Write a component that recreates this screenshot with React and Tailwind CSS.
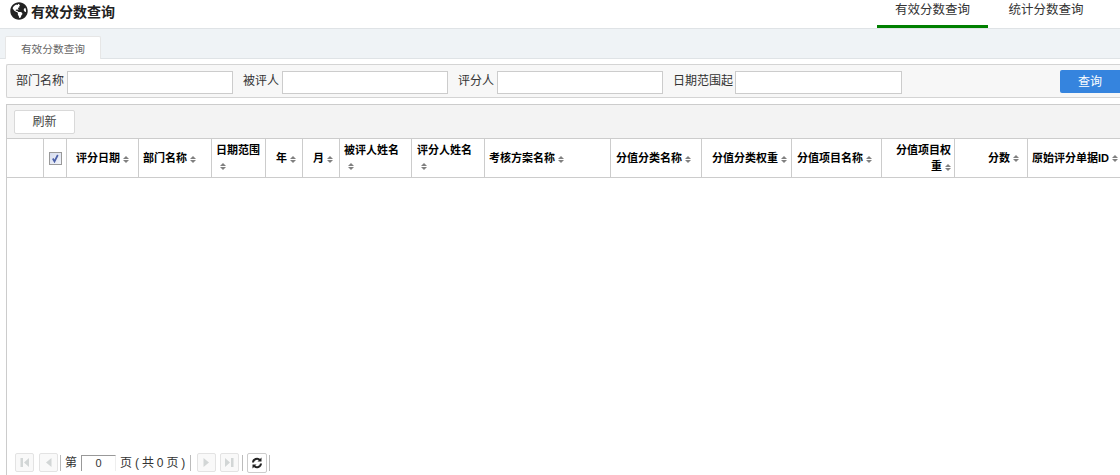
import React from "react";
import { FaGlobeAmericas } from "react-icons/fa";

const font = { fontFamily: '"Liberation Sans", "Noto Sans CJK SC", sans-serif' };

function Sort() {
  return (
    <span className="inline-flex flex-col items-center align-middle ml-[3px] gap-[1px] w-[6px]">
      <span className="w-0 h-0 border-x-[3px] border-x-transparent border-b-[3.500px] border-b-[#808080]" />
      <span className="w-0 h-0 border-x-[3px] border-x-transparent border-t-[3.500px] border-t-[#808080]" />
    </span>
  );
}

const cols = [
  { w: "w-[72px]", t: "评分日期", cls: "pl-[9px] items-center" },
  { w: "w-[73px]", t: "部门名称", cls: "pl-[4px] items-center" },
  { w: "w-[54px]", t: "日期范围", cls: "pl-[4px] items-start pt-[4px]", wrap: true },
  { w: "w-[37px]", t: "年", cls: "pl-[10px] items-center" },
  { w: "w-[37px]", t: "月", cls: "pl-[10px] items-center" },
  { w: "w-[72px]", t: "被评人姓名", cls: "pl-[4px] items-start pt-[4px]", wrap: true },
  { w: "w-[73px]", t: "评分人姓名", cls: "pl-[5px] items-start pt-[4px]", wrap: true },
  { w: "w-[126px]", t: "考核方案名称", cls: "pl-[4px] items-center" },
  { w: "w-[91px]", t: "分值分类名称", cls: "pl-[5px] items-center" },
  { w: "w-[90px]", t: "分值分类权重", cls: "pl-[10px] items-center" },
  { w: "w-[90px]", t: "分值项目名称", cls: "pl-[5px] items-center" },
];

function Header({ c }) {
  return (
    <div className={`${c.w} h-full shrink-0 border-r border-[#ccc] flex text-[11px] font-bold text-black leading-[14px] ${c.cls}`}>
      {c.wrap ? (
        <div>
          <div>{c.t}</div>
          <div className="mt-[2px] pl-[1px] h-[14px] flex items-center"><Sort /></div>
        </div>
      ) : (
        <span className="whitespace-nowrap">{c.t}<Sort /></span>
      )}
    </div>
  );
}

function Field({ label, w, gap = "ml-[3px]" }) {
  return (
    <div className="flex items-center shrink-0">
      <span className="text-[12px] text-[#333] whitespace-nowrap">{label}</span>
      <input className={`${w} h-[23px] mt-[3px] ${gap} bg-white border border-[#ccc] outline-none`} readOnly />
    </div>
  );
}

function PagerBtn({ d }) {
  return (
    <span className="w-[19px] h-[19px] border border-[#e3e3e3] rounded-[2px] flex items-center justify-center bg-[#f9f9f9] shrink-0">
      <svg width="13" height="13" viewBox="0 0 13 13" fill="#d2d6d6">
        <path d={d} />
      </svg>
    </span>
  );
}

export default function App() {
  return (
    <div className="w-[1120px] h-[475px] overflow-hidden bg-white flex flex-col text-[#333]" style={font}>
      <header className="h-[29px] shrink-0 bg-white border-b border-[#dfe3e6] flex justify-between">
        <div className="flex items-start pl-[10px] pt-[2px] gap-[3px]">
          <FaGlobeAmericas className="w-[18px] h-[18px] text-[#222] shrink-0" />
          <span className="text-[14px] font-bold text-[#222] leading-[21px]">有效分数查询</span>
        </div>
        <nav className="flex mr-[16px] text-[12.500px] text-[#333] leading-[21px]">
          <div className="w-[111px] h-[28px] border-b-[3px] border-[#008000] text-center">有效分数查询</div>
          <div className="w-[116px] h-[28px] text-center">统计分数查询</div>
        </nav>
      </header>

      <div className="h-[30px] shrink-0 bg-[#eff3f6] border-b border-[#dfe3e6] flex items-end pl-[5px]">
        <div className="w-[96px] h-[23px] mb-[-1px] bg-white border border-b-0 border-[#e6e6e6] rounded-t-[2px] text-[10.700px] text-[#666] text-center leading-[24px]">有效分数查询</div>
      </div>

      <div className="h-[34px] mt-[5px] ml-[6px] shrink-0 bg-[#f7f7f7] border-y border-l border-[#d4d4d4] rounded-l-[2px] flex items-center pl-[9px]">
        <Field label="部门名称" w="w-[166px]" />
        <div className="w-[10px] shrink-0" />
        <Field label="被评人" w="w-[166px]" />
        <div className="w-[10px] shrink-0" />
        <Field label="评分人" w="w-[166px]" />
        <div className="w-[10px] shrink-0" />
        <Field label="日期范围起" w="w-[167px]" gap="ml-[2px]" />
        <button className="ml-[158px] mt-[1px] w-[60px] h-[23px] pt-[1px] shrink-0 bg-[#3584de] rounded-l-[2px] text-white text-[12px]">查询</button>
      </div>

      <main className="flex-1 min-h-0 mt-[6px] ml-[6px] border-t border-l border-[#ccc] flex flex-col">
        <div className="h-[34px] shrink-0 bg-[#f3f3f3] border-b border-[#ccc] flex items-center pl-[7px]">
          <button className="w-[61px] h-[24px] bg-white border border-[#d9d9d9] rounded-[2px] text-[12px] text-[#444]">刷新</button>
        </div>

        <div className="h-[39px] shrink-0 border-b border-[#ccc] flex bg-white overflow-hidden">
          <div className="w-[37px] shrink-0 h-full border-r border-[#ccc]" />
          <div className="w-[23px] shrink-0 h-full border-r border-[#ccc] flex items-center justify-center">
            <span className="w-[13px] h-[13px] border border-[#999] bg-gradient-to-br from-[#d6dcee] to-[#f2f4fa] flex items-center justify-center">
              <svg width="9" height="9" viewBox="0 0 9 9" fill="none" stroke="#4a5fa8" strokeWidth="1.700"><path d="M1.800 4.500L3.500 7.500 6.800 1" /></svg>
            </span>
          </div>
          {cols.map((c) => <Header key={c.t} c={c} />)}
          <div className="w-[73px] h-full shrink-0 border-r border-[#ccc] text-[11px] font-bold text-black leading-[14px] text-right pr-[3px] pt-[4px]">
            <div>分值项目权</div>
            <div className="mt-[2px]">重<Sort /></div>
          </div>
          <div className="w-[73px] h-full shrink-0 border-r border-[#ccc] flex items-center justify-end pr-[8px] text-[11px] font-bold text-black whitespace-nowrap">分数<Sort /></div>
          <div className="w-[93px] h-full shrink-0 flex items-center pl-[4px] text-[11px] font-bold text-black whitespace-nowrap">原始评分单据ID<Sort /></div>
        </div>

        <div className="flex-1 min-h-0 bg-white" />

        <div className="h-[27px] shrink-0 bg-white flex items-center pt-[2px] pl-[8px] text-[12px] text-[#333]">
          <div className="flex gap-[5px]">
            <PagerBtn d="M2.500 2h2.500v9H2.500zM11 2v9L6 6.500z" />
            <PagerBtn d="M9.500 2v9L4 6.500z" />
          </div>
          <span className="w-px h-[16px] bg-[#bbb] ml-[2px]" />
          <span className="ml-[4px]">第</span>
          <input readOnly value="0" className="w-[35px] h-[16px] ml-[4px] border-t border-l border-[#999] border-r border-r-[#eee] text-center text-[11px] outline-none" />
          <span className="ml-[4px] w-[65px] whitespace-nowrap tracking-[-0.2px]">页 ( 共 0 页 )</span>
          <span className="w-px h-[16px] bg-[#bbb] ml-[5px]" />
          <div className="flex gap-[4px] ml-[6px]">
            <PagerBtn d="M3.500 2v9L9 6.500z" />
            <PagerBtn d="M2 2v9l5-4.500zM8 2h2.500v9H8z" />
          </div>
          <span className="w-px h-[16px] bg-[#bbb] ml-[3px]" />
          <span className="w-[20px] h-[20px] ml-[4px] border border-[#ccc] rounded-[2px] flex items-center justify-center shrink-0">
            <svg width="12" height="12" viewBox="0 0 12 12" fill="none" stroke="#222" strokeWidth="2">
              <path d="M10 6.500a4 4 0 0 1-7 2.300M2 5.500a4 4 0 0 1 7-2.300" />
              <path d="M10.500 .5v4H6.500zM1.500 11.500v-4h4z" stroke="none" fill="#222" />
            </svg>
          </span>
          <span className="w-px h-[16px] bg-[#bbb] ml-[2px]" />
        </div>
      </main>
    </div>
  );
}
